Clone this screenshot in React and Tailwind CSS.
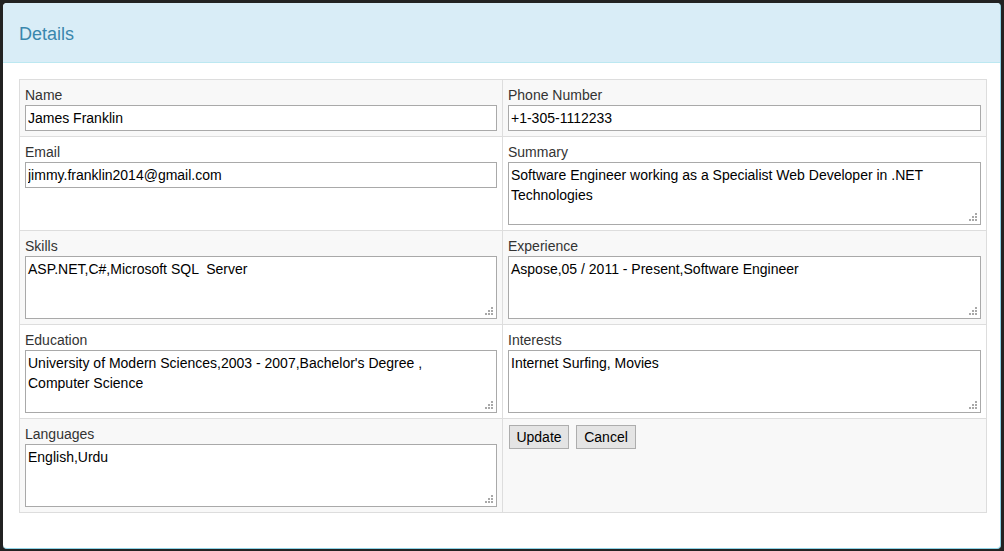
import React from "react";

const font = { fontFamily: '"Liberation Sans", Arial, sans-serif' };

function Grip() {
  return (
    <svg className="absolute right-[4px] bottom-[4px] pointer-events-none" width="8" height="8" viewBox="0 0 8 8">
      <g fill="#a8a8a8">
        <rect x="6" y="0" width="2" height="2" />
        <rect x="3" y="3" width="2" height="2" />
        <rect x="6" y="3" width="2" height="2" />
        <rect x="0" y="6" width="2" height="2" />
        <rect x="3" y="6" width="2" height="2" />
        <rect x="6" y="6" width="2" height="2" />
      </g>
    </svg>
  );
}

function Field({ label, value, multi }) {
  return (
    <div className="flex flex-col">
      <div className="h-5 leading-5 text-[14px] text-[#333]">{label}</div>
      {multi ? (
        <div className="relative">
          <textarea
            defaultValue={value}
            className="block w-full h-[63px] border border-[#a9a9a9] bg-white pl-[2px] pr-[20px] py-[2px] text-[14px] leading-5 text-black outline-none resize-none overflow-hidden"
            style={font}
          />
          <Grip />
        </div>
      ) : (
        <input
          defaultValue={value}
          className="block w-full h-[26px] border border-[#a9a9a9] bg-white px-[2px] text-[14px] text-black outline-none"
          style={font}
        />
      )}
    </div>
  );
}

function Cell({ children, left }) {
  return (
    <td className={`border border-[#ddd] p-[5px] align-top ${left ? "w-[483px]" : ""}`}>{children}</td>
  );
}

export default function App() {
  return (
    <div className="w-[1004px] h-[551px] bg-[#222] p-[3px]" style={font}>
      <div className="w-[998px] h-[546px] bg-white rounded-[4px] overflow-hidden border-r border-b border-[#8fd3e6]">
        <div className="h-[60px] bg-[#d9edf7] border-b border-[#bce8f1] flex items-center px-4 pt-[3px]">
          <span className="text-[18px] text-[#3a87ad]">Details</span>
        </div>
        <div className="pl-4 pr-[14px] pt-4">
          <table className="w-[968px] border-collapse border border-[#ddd] table-fixed">
            <tbody>
              <tr className="bg-[#f8f8f8]">
                <Cell left><Field label="Name" value="James Franklin" /></Cell>
                <Cell><Field label="Phone Number" value="+1-305-1112233" /></Cell>
              </tr>
              <tr className="bg-white">
                <Cell left><Field label="Email" value="jimmy.franklin2014@gmail.com" /></Cell>
                <Cell>
                  <Field
                    label="Summary"
                    multi
                    value="Software Engineer working as a Specialist Web Developer in .NET Technologies"
                  />
                </Cell>
              </tr>
              <tr className="bg-[#f8f8f8]">
                <Cell left><Field label="Skills" multi value="ASP.NET,C#,Microsoft SQL  Server" /></Cell>
                <Cell>
                  <Field label="Experience" multi value="Aspose,05 / 2011 - Present,Software Engineer" />
                </Cell>
              </tr>
              <tr className="bg-white">
                <Cell left>
                  <Field
                    label="Education"
                    multi
                    value="University of Modern Sciences,2003 - 2007,Bachelor's Degree , Computer Science"
                  />
                </Cell>
                <Cell><Field label="Interests" multi value="Internet Surfing, Movies" /></Cell>
              </tr>
              <tr className="bg-[#f8f8f8]">
                <Cell left><Field label="Languages" multi value="English,Urdu" /></Cell>
                <td className="border border-[#ddd] p-[5px] align-top">
                  <div className="flex gap-[7px] pt-[1px] pl-[1px]">
                    <button className="h-[24px] w-[60px] border border-[#adadad] bg-[#e4e4e4] text-[14px] text-black" style={font}>
                      Update
                    </button>
                    <button className="h-[24px] w-[60px] border border-[#adadad] bg-[#e4e4e4] text-[14px] text-black" style={font}>
                      Cancel
                    </button>
                  </div>
                </td>
              </tr>
            </tbody>
          </table>
        </div>
      </div>
    </div>
  );
}
